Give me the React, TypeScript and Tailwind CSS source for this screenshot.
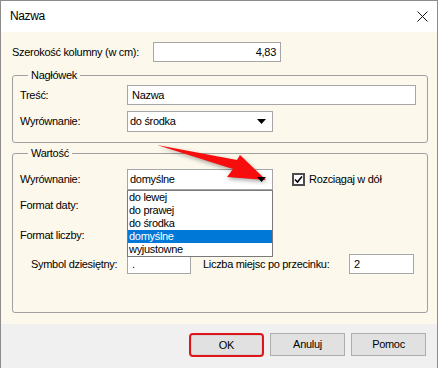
import { ReactNode } from "react";

type BoxProps = {
  value: string;
  width: string;
  right?: boolean;
};

function TextBox({ value, width, right = false }: BoxProps) {
  return (
    <div
      className={`flex h-[20px] items-center border border-[#a6a6a6] bg-white px-[4px] ${width} ${
        right ? "justify-end" : "justify-start"
      }`}
    >
      {value}
    </div>
  );
}

function Combo({ value, children }: { value: string; children?: ReactNode }) {
  return (
    <div className="relative h-[21px] w-[146px]">
      <div className="flex h-full w-full items-center justify-between border border-[#a6a6a6] bg-white pl-[2px] pr-[6px]">
        <span>{value}</span>
        <svg width="9" height="5" viewBox="0 0 9 5" className="relative z-20">
          <path d="M0 0h9L4.5 5z" fill="#000" />
        </svg>
      </div>
      {children}
    </div>
  );
}

const options = ["do lewej", "do prawej", "do środka", "domyślne", "wyjustowne"];

function Group({ title, className, children }: { title: string; className: string; children: ReactNode }) {
  return (
    <fieldset className={`w-[416px] rounded-[3px] border border-[#a0a0a0] px-[7px] ${className}`}>
      <legend className="ml-[8px] px-[3px] leading-[13px]">{title}</legend>
      {children}
    </fieldset>
  );
}

function Button({ label }: { label: string }) {
  return (
    <div className="flex h-[23px] w-[75px] items-center justify-center border border-[#adadad] bg-[#e1e1e1]">
      {label}
    </div>
  );
}

export default function App() {
  return (
    <div className="relative h-[368px] w-[439px] overflow-hidden bg-white font-['Liberation_Sans',Arial,sans-serif] text-[11px] leading-[13px] tracking-[-0.3px] text-black">
      <div className="flex h-full w-[438px] flex-col border-l border-r border-t border-[#8c8c8c]">
        <div className="flex h-[31px] shrink-0 items-center justify-between bg-white pl-[9px] pr-[9px]">
          <span className="text-[12px] tracking-[-0.4px]">Nazwa</span>
          <svg width="11" height="11" viewBox="0 0 11 11">
            <path d="M0.5 0.5L10.5 10.5M10.5 0.5L0.5 10.5" stroke="#111" strokeWidth="1" fill="none" />
          </svg>
        </div>

        <div className="flex h-[292px] shrink-0 flex-col bg-[#fdf8ec] pl-[11px] pt-[10px]">
          <div className="flex h-[20px] items-center">
            <span className="w-[141px]">Szerokość kolumny (w cm):</span>
            <TextBox value="4,83" width="w-[128px]" right />
          </div>

          <Group title="Nagłówek" className="mt-[7px] pb-[10px] pt-[3px]">
            <div className="flex h-[20px] items-center">
              <span className="w-[107px]">Treść:</span>
              <TextBox value="Nazwa" width="w-[289px]" />
            </div>
            <div className="mt-[6px] flex h-[21px] items-center">
              <span className="w-[107px]">Wyrównanie:</span>
              <Combo value="do środka" />
            </div>
          </Group>

          <Group title="Wartość" className="mt-[4px] pb-[38px] pt-[9px]">
            <div className="flex h-[21px] items-center">
              <span className="w-[107px]">Wyrównanie:</span>
              <Combo value="domyślne">
                <div className="absolute left-0 top-[21px] z-30 w-[146px] border border-[#7a7a7a] bg-white">
                  {options.map((o) => (
                    <div
                      key={o}
                      className={`h-[13px] pl-[1px] leading-[13px] ${
                        o === "domyślne" ? "bg-[#0078d7] text-white" : ""
                      }`}
                    >
                      {o}
                    </div>
                  ))}
                </div>
              </Combo>
              <div className="ml-[19px] flex h-[13px] w-[13px] items-center justify-center border-2 border-[#4d4d4d] bg-white">
                <svg width="9" height="9" viewBox="0 0 9 9">
                  <path d="M1 4.5L3.5 7L8 1.5" stroke="#000" strokeWidth="1.6" fill="none" />
                </svg>
              </div>
              <span className="ml-[4px]">Rozciągaj w dół</span>
            </div>
            <div className="flex h-[30px] items-center">Format daty:</div>
            <div className="flex h-[30px] items-center">Format liczby:</div>
            <div className="mt-[4px] flex h-[20px] items-center pl-[11px]">
              <span className="w-[96px]">Symbol dziesiętny:</span>
              <TextBox value="." width="w-[64px]" />
              <span className="ml-[12px] w-[146px]">Liczba miejsc po przecinku:</span>
              <TextBox value="2" width="w-[65px]" />
            </div>
          </Group>
        </div>

        <div className="flex flex-1 items-start justify-end gap-[6px] bg-[#f0f0f0] pr-[11px] pt-[9px]">
          <div className="flex h-[24px] w-[75px] items-center justify-center rounded-[4px] border-2 border-[#e3141b] p-[1px]">
            <div className="flex h-full w-full items-center justify-center bg-[#e1e1e1] shadow-[0_0_2px_rgba(0,0,0,0.35)]">
              OK
            </div>
          </div>
          <Button label="Anuluj" />
          <Button label="Pomoc" />
        </div>
      </div>

      <svg
        className="pointer-events-none absolute left-0 top-0 z-10 drop-shadow-[1px_2px_2px_rgba(0,0,0,0.35)]"
        width="439"
        height="368"
        viewBox="0 0 439 368"
      >
        <path d="M157 145L237 160L240 155L266 180L227 177L233 169Z" fill="#f80d0d" />
      </svg>
    </div>
  );
}
